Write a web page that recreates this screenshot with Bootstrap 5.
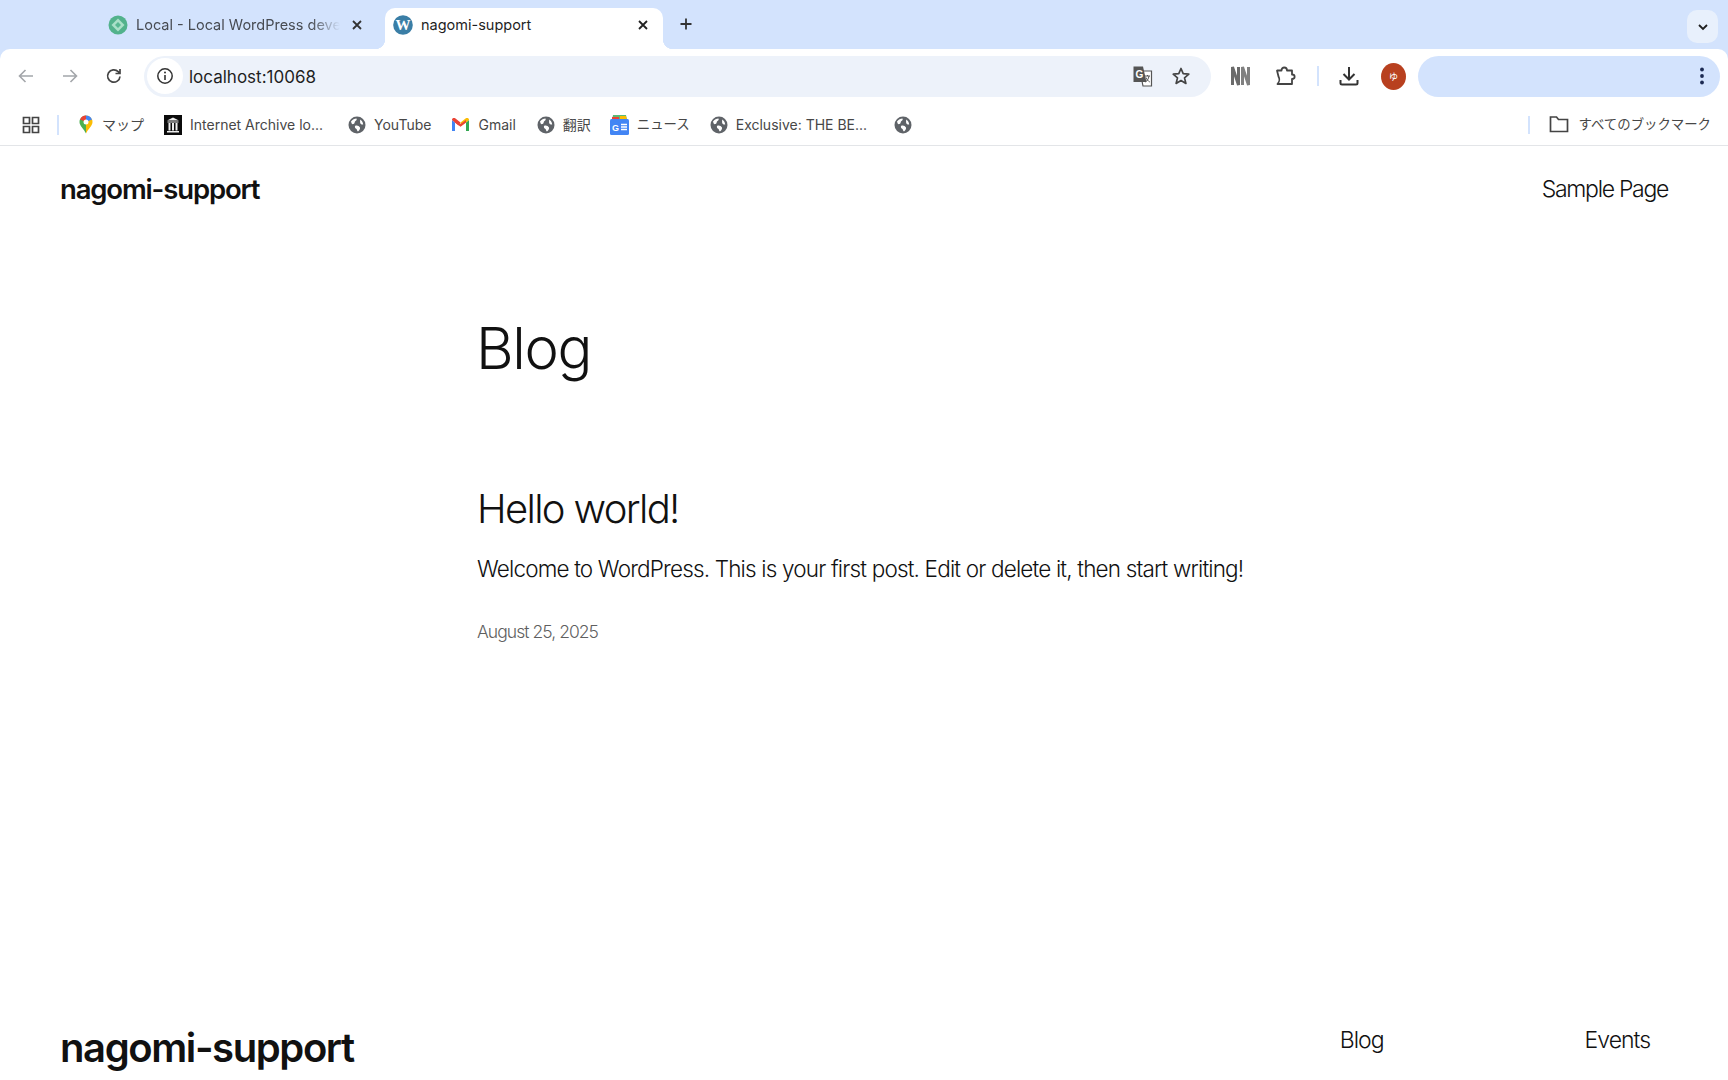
<!DOCTYPE html>
<html lang="en">
<head>
<meta charset="utf-8">
<title>nagomi-support</title>
<link href="https://cdn.jsdelivr.net/npm/bootstrap@5.3.0/dist/css/bootstrap.min.css" rel="stylesheet">
<style>
html,body{height:1080px;overflow:hidden;background:#fff}
body{font-family:Inter,"Noto Sans CJK JP",sans-serif;color:#111}
.chrome{background:#d3e3fd;font-family:Inter,"Noto Sans CJK JP",sans-serif}
.tabstrip{height:49px;padding-top:8px}
.tab-a,.tab-b{height:41px;font-size:14.5px;position:relative;padding-bottom:7px}
.tab-a{margin-left:100px;width:270px;color:#474b52;margin-right:15px;padding-left:8px;padding-right:3px}
.tab-b{width:278px;background:#fff;border-radius:10px 10px 0 0;color:#1f1f1f;padding-left:8px;padding-right:10px}
.tab-b::before,.tab-b::after{content:"";position:absolute;bottom:0;width:10px;height:10px}
.tab-b::before{left:-10px;background:radial-gradient(circle at 0 0,transparent 10px,#fff 10.5px)}
.tab-b::after{right:-10px;background:radial-gradient(circle at 100% 0,transparent 10px,#fff 10.5px)}
.fade-txt{width:206px;white-space:nowrap;-webkit-mask-image:linear-gradient(90deg,#000 85%,transparent 99%);mask-image:linear-gradient(90deg,#000 85%,transparent 99%)}
.plus-ic{margin-left:15px;margin-bottom:4px}
.chev-btn{width:31px;height:33px;border-radius:10px;background:#e8f0fc;margin:2px 10px 0 auto}
.toolbar{height:51px;background:#fff;border-radius:10px 10px 0 0;padding:7px 8px 4px 16px}
.addr{width:1067px;height:41px;background:#edf2fa;border-radius:21px;margin-left:20px;padding-right:20px;font-size:17px;color:#1f1f1f}
.addr-txt{padding-top:4px;margin-left:1px}
.info-wrap{width:36px;height:36px;background:#fff;border-radius:50%;margin-left:3px;margin-right:5px}
.side-pill{width:302px;height:41px;background:#d3e3fd;border-radius:21px;margin-left:auto;padding-right:15px}
.avatar{width:25px;height:27px;border-radius:50%;background:#b8401f;color:#fff;font-size:9px;line-height:1}
.vsep{width:2px;height:20px;background:#d3e3fd}
.bookbar{height:46px;background:#fff;border-bottom:1px solid #e3e5e8;padding:4px 17px 0 22px;font-size:14px;color:#474747}
.bm{white-space:nowrap}
.bm svg{flex:none}
.bm span{margin-left:var(--g,8px)}
.jp-sm{font-size:13.400px}
.page-top{padding:26px 60px 0 60px;height:86px}
.site-title{font-size:27.500px;font-weight:600;letter-spacing:-1.15px;margin:0;line-height:34px}
.nav-lnk{font-size:23px;font-weight:340;letter-spacing:-1.3px;line-height:34px;color:#111;text-decoration:none}
.content-col{padding:0 0 0 477px}
.blog-h{font-size:58px;font-weight:340;letter-spacing:-1.4px;line-height:72px;margin:80px 0 0 -1px}
.post-h{font-size:40px;font-weight:340;letter-spacing:-1.65px;line-height:50px;margin:100px 0 0}
.post-p{font-size:22.500px;font-weight:340;letter-spacing:-.83px;line-height:34px;margin:18px 0 0}
.post-d{font-size:17.500px;font-weight:340;letter-spacing:-.95px;color:#5f5f5f;line-height:24px;margin:34px 0 0}
.foot-row{padding:0 78px 0 60px;margin-top:380px}
.foot-title{font-size:40px;font-weight:600;letter-spacing:-1.400px;line-height:48px;margin:0}
.foot-nav{gap:201px;margin-top:-1px}
.foot-nav .nav-lnk{letter-spacing:-1px}
</style>
</head>
<body>
<svg width="0" height="0" class="d-block">
<defs>
<symbol id="globe" viewBox="0 0 18 18"><circle cx="9" cy="9" r="8.500" fill="#5f6368"/><path d="M3 5.500c1.500-2 3.500-3 5.500-3 .5 1 0 2-1 2.500S7 7.500 5.500 8 3.500 7.500 3 5.500zM7 10c2-1 4 0 5 1.500.5 1.500-1 3-2 4-1-.5-1-2-1.500-2.500C7.500 12.500 6.500 11.500 7 10zM12 3.500c1.500.5 3 2.500 3.200 5-1.200.3-2.500-.3-3-1.500-.4-1.200.2-2.500-.2-3.500z" fill="#fff"/></symbol>
</defs>
</svg>
<div class="chrome">
  <div class="tabstrip d-flex align-items-start">
    <div class="tab-a d-flex align-items-center">
      <svg width="20" height="20" viewBox="0 0 20 20"><circle cx="10" cy="10" r="9.500" fill="#52b28c"/><path d="M10 3.500 16.500 10 10 16.500 3.500 10z" fill="#a9e0c8"/><path d="M10 7 13 10 10 13 7 10z" fill="#58b892"/></svg>
      <span class="fade-txt ms-2">Local - Local WordPress deve</span>
      <svg width="12" height="12" viewBox="0 0 12 12" class="ms-auto me-1"><path d="M2 2 10 10M10 2 2 10" stroke="#333" stroke-width="1.800" fill="none"/></svg>
    </div>
    <div class="tab-b d-flex align-items-center">
      <svg width="20" height="20" viewBox="0 0 20 20"><circle cx="10" cy="10" r="9.800" fill="#3a7ea6"/><text x="10" y="15" text-anchor="middle" font-family="Liberation Serif" font-size="15" font-weight="700" fill="#fff">W</text></svg>
      <span class="ms-2">nagomi-support</span>
      <svg width="12" height="12" viewBox="0 0 12 12" class="ms-auto me-1"><path d="M2 2 10 10M10 2 2 10" stroke="#222" stroke-width="1.800" fill="none"/></svg>
    </div>
    <svg class="plus-ic mt-2" width="16" height="16" viewBox="0 0 16 16"><path d="M8 2.500v11M2.500 8h11" stroke="#333" stroke-width="1.800"/></svg>
    <div class="chev-btn d-flex align-items-center justify-content-center">
      <svg width="12" height="12" viewBox="0 0 12 12"><path d="M2 4 6 8 10 4" stroke="#1f1f1f" stroke-width="1.800" fill="none"/></svg>
    </div>
  </div>
  <div class="toolbar d-flex align-items-center">
    <svg width="20" height="20" viewBox="0 0 20 20"><path d="M17 10H4M9.500 4 3.500 10l6 6" stroke="#a3a6aa" stroke-width="1.600" fill="none"/></svg>
    <svg class="ms-4" width="20" height="20" viewBox="0 0 20 20"><path d="M3 10h13M10.500 4l6 6-6 6" stroke="#a3a6aa" stroke-width="1.600" fill="none"/></svg>
    <svg class="ms-4" width="20" height="20" viewBox="0 0 20 20"><path d="M16 10.500A6.200 6.200 0 1 1 14.200 5.600L16 7.500M16 3v4.500h-4.500" stroke="#444" stroke-width="1.700" fill="none"/></svg>
    <div class="addr d-flex align-items-center">
      <div class="info-wrap d-flex align-items-center justify-content-center">
        <svg width="18" height="18" viewBox="0 0 18 18"><circle cx="9" cy="9" r="7.200" fill="none" stroke="#333" stroke-width="1.500"/><path d="M9 8v5" stroke="#333" stroke-width="1.600"/><circle cx="9" cy="5.600" r="1" fill="#333"/></svg>
      </div>
      <span class="addr-txt">localhost:10068</span>
      <svg class="ms-auto" width="22" height="22" viewBox="0 0 22 22"><path d="M8 6h11.500v15H11z" fill="#fff" stroke="#555" stroke-width="1.200"/><path d="M1.500 1.500H11l3.500 15.500H1.500z" fill="#555"/><text x="7.500" y="12.500" text-anchor="middle" font-family="Liberation Sans" font-size="10" font-weight="700" fill="#fff">G</text><path d="M13 11h5M15.500 10v1M17 11c-.5 3-2 5-3.500 6M14 12.500c.8 2 2 3.500 3.800 4.500" stroke="#555" stroke-width="1" fill="none"/></svg>
      <svg width="20" height="20" viewBox="0 0 20 20" style="margin-left:17px"><path d="M10 2.500 12.200 7.700 17.800 8.200 13.500 11.900 14.900 17.400 10 14.500 5.100 17.400 6.500 11.900 2.200 8.200 7.800 7.700z" fill="none" stroke="#444" stroke-width="1.700" stroke-linejoin="round"/></svg>
    </div>
    <svg style="margin-left:19px" width="22" height="20" viewBox="0 0 22 20"><path d="M2.500 19V1L8.500 19V1" fill="none" stroke="#6a6a6a" stroke-width="3"/><path d="M12.500 19V1L18.500 19V1" fill="none" stroke="#808080" stroke-width="3"/></svg>
    <svg style="margin-left:22px" width="22" height="22" viewBox="0 0 22 22"><path d="M3 5.500h4.500c0-4 5.500-4 5.500 0H18v4c3.500 0 3.500 4.500 0 4.500v5H3.500c2.500-3 2.500-4.500 1-7.500z" fill="none" stroke="#444" stroke-width="1.800" stroke-linejoin="round"/></svg>
    <div class="vsep" style="margin-left:21px"></div>
    <svg style="margin-left:19px" width="22" height="22" viewBox="0 0 22 22"><path d="M11 2v12M5.500 9 11 14.500 16.500 9M2.500 15v3a1.500 1.500 0 0 0 1.500 1.500h14a1.500 1.500 0 0 0 1.500-1.500v-3" fill="none" stroke="#333" stroke-width="2"/></svg>
    <div class="avatar d-flex align-items-center justify-content-center" style="margin-left:21px">ゆ</div>
    <div class="side-pill d-flex align-items-center justify-content-end">
      <svg width="6" height="20" viewBox="0 0 6 20"><circle cx="3" cy="3.500" r="1.900" fill="#1c2a52"/><circle cx="3" cy="10" r="1.900" fill="#1c2a52"/><circle cx="3" cy="16.500" r="1.900" fill="#1c2a52"/></svg>
    </div>
  </div>
  <div class="bookbar d-flex align-items-center">
    <svg width="18" height="18" viewBox="0 0 18 18"><path d="M1.500 1.500h6v6h-6zM10.500 1.500h6v6h-6zM1.500 10.500h6v6h-6zM10.500 10.500h6v6h-6z" fill="none" stroke="#444" stroke-width="1.700"/></svg>
    <div class="vsep" style="margin-left:17px"></div>
    <div class="bm d-flex align-items-center" style="margin-left:19px">
      <svg width="16" height="19" viewBox="0 0 16 19"><path d="M8 18.500C6 14 1.500 11 1.500 7A6.500 6.500 0 0 1 8 .5Z" fill="#4caf50"/><path d="M8 18.500C10 14 14.500 11 14.500 7A6.500 6.500 0 0 0 8 .5Z" fill="#fbbc04"/><path d="M8 .5A6.500 6.500 0 0 1 14 4.500L8 7Z" fill="#4285f4"/><path d="M8 .5A6.500 6.500 0 0 0 2 4.500L8 7Z" fill="#ea4335"/><circle cx="8" cy="7" r="2.500" fill="#fff"/></svg>
      <span>マップ</span>
    </div>
    <div class="bm d-flex align-items-center" style="margin-left:20px">
      <svg width="18" height="20" viewBox="0 0 18 20"><rect width="18" height="20" fill="#0b0b0b"/><path d="M3 5.500 9 2.500l6 3zM3.500 6.500h11v1h-11zM4.500 8h2v7.500h-2zM8 8h2v7.500H8zM11.500 8h2v7.500h-2zM3 16h12v1.500H3z" fill="#eee"/></svg>
      <span>Internet Archive lo...</span>
    </div>
    <div class="bm d-flex align-items-center" style="margin-left:25px">
      <svg width="18" height="18"><use href="#globe"/></svg>
      <span>YouTube</span>
    </div>
    <div class="bm d-flex align-items-center" style="margin-left:20px">
      <svg width="19" height="15" viewBox="0 0 19 15"><path d="M1 14V3l3 2.500V14z" fill="#4285f4"/><path d="M15 14V5.500l3-2.500v11z" fill="#34a853"/><path d="M1 3C1 1 3 .5 4.500 1.500L9.500 5.500l-2 3L1 3z" fill="#ea4335"/><path d="M9.500 5.500l5-4C16 .5 18 1 18 3l-3 2.500-5.500 4z" fill="#fbbc04"/><path d="M4 5.500 9.500 9.700 15 5.500V3L9.500 7 4 3z" fill="#ea4335"/></svg>
      <span>Gmail</span>
    </div>
    <div class="bm d-flex align-items-center" style="margin-left:21px">
      <svg width="18" height="18"><use href="#globe"/></svg>
      <span>翻訳</span>
    </div>
    <div class="bm d-flex align-items-center" style="margin-left:19px">
      <svg width="19" height="21" viewBox="0 0 19 21"><path d="M3 1h13l1 5H2z" fill="#5bb974"/><path d="M2 3h7v3H2z" fill="#ea4335"/><path d="M10 2h6l1 4h-7z" fill="#fbbc04"/><rect y="5" width="19" height="16" rx="1.500" fill="#4285f4"/><text x="5.500" y="16.500" text-anchor="middle" font-family="Liberation Sans" font-size="9" font-weight="700" fill="#fff">G</text><path d="M11 10.500h6M11 13h6M11 15.500h6" stroke="#fff" stroke-width="1.300"/></svg>
      <span class="jp-sm">ニュース</span>
    </div>
    <div class="bm d-flex align-items-center" style="margin-left:20px">
      <svg width="18" height="18"><use href="#globe"/></svg>
      <span>Exclusive: THE BE...</span>
    </div>
    <div class="bm d-flex align-items-center" style="margin-left:27px">
      <svg width="18" height="18"><use href="#globe"/></svg>
    </div>
    <div class="vsep ms-auto" style="height:18px"></div>
    <div class="bm d-flex align-items-center" style="margin-left:19px;--g:10px">
      <svg width="20" height="18" viewBox="0 0 20 18"><path d="M1.500 2h6l2 2.500h9v12h-17z" fill="none" stroke="#444" stroke-width="1.700"/></svg>
      <span class="jp-sm">すべてのブックマーク</span>
    </div>
  </div>
</div>
<header class="page-top d-flex justify-content-between">
  <p class="site-title">nagomi-support</p>
  <a class="nav-lnk" href="#">Sample Page</a>
</header>
<main class="content-col">
  <h1 class="blog-h">Blog</h1>
  <h2 class="post-h">Hello world!</h2>
  <p class="post-p">Welcome to WordPress. This is your first post. Edit or delete it, then start writing!</p>
  <p class="post-d">August 25, 2025</p>
</main>
<footer class="foot-row d-flex justify-content-between align-items-start">
  <p class="foot-title">nagomi-support</p>
  <div class="foot-nav d-flex">
    <a class="nav-lnk" href="#">Blog</a>
    <a class="nav-lnk" href="#">Events</a>
  </div>
</footer>
<script src="https://cdn.jsdelivr.net/npm/bootstrap@5.3.0/dist/js/bootstrap.bundle.min.js"></script>
</body>
</html>
